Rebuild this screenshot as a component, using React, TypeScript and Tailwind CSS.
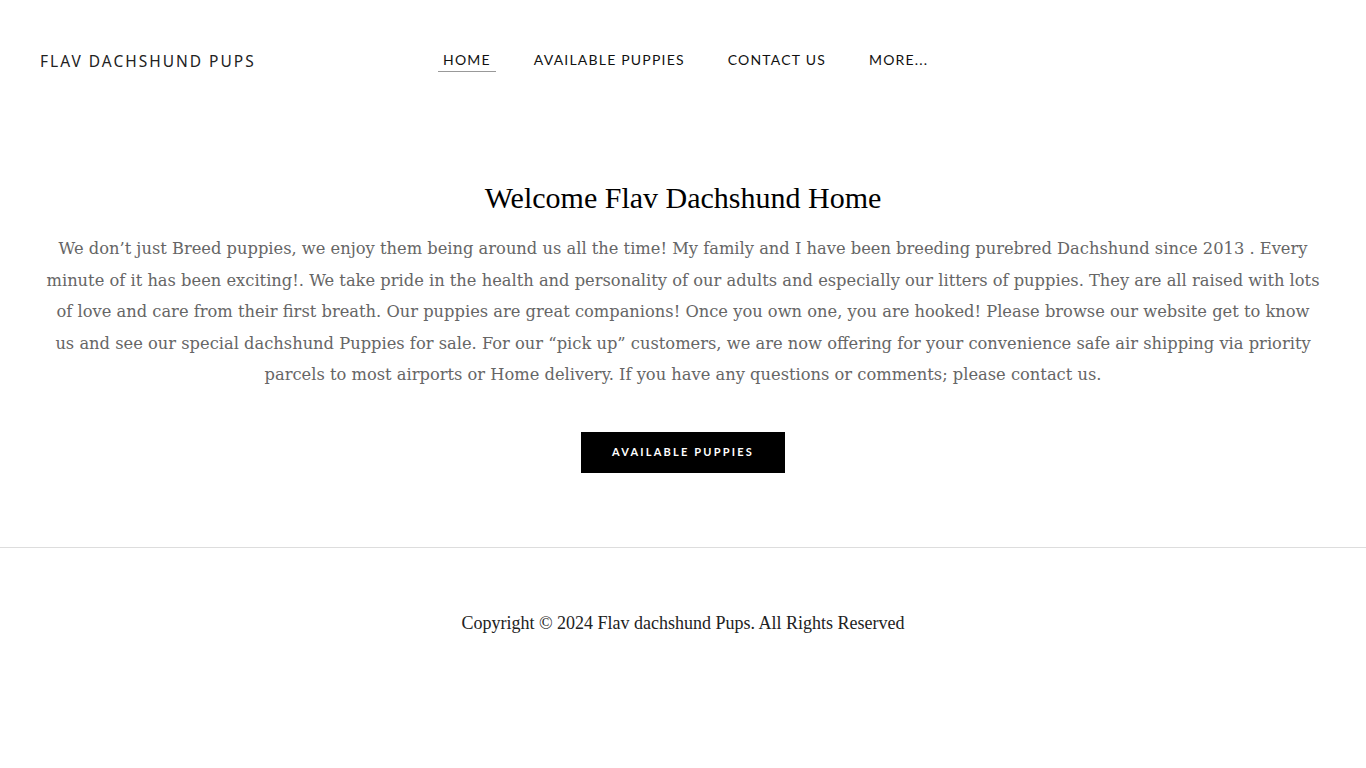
export default function App() {
  const nav = ["HOME", "AVAILABLE PUPPIES", "CONTACT US", "MORE..."];
  return (
    <div className="min-h-screen bg-white">
      <header className="flex items-center h-[121px] px-10">
        <div className="w-[398px] shrink-0 pt-[3px] text-[15.5px] tracking-[2px] text-[#222] font-['Noto_Sans',sans-serif]">
          FLAV DACHSHUND PUPS
        </div>
        <nav className="flex items-center gap-[33px] -mt-[7px] font-['Lato',sans-serif]">
          {nav.map((n, i) => (
            <a
              key={n}
              className={
                "px-[5px] pt-[7px] pb-[1px] text-[14px] tracking-[1.2px] text-[#111] " +
                (i === 0 ? "border-b border-[#999]" : "border-b border-transparent")
              }
            >
              {n}
            </a>
          ))}
        </nav>
      </header>

      <main className="px-10 pt-[57px] pb-[74px] text-center">
        <h1 className="text-[30px] leading-[40px] text-black font-['Liberation_Serif',serif]">
          Welcome Flav Dachshund Home
        </h1>
        <p className="mt-[15px] mx-[6px] text-[16.3px] leading-[31.5px] text-[#666] font-['DejaVu_Serif',serif]">
          We don’t just Breed puppies, we enjoy them being around us all the time! My family and I have been breeding purebred Dachshund since 2013 . Every minute of it has been exciting!. We take pride in the health and personality of our adults and especially our litters of puppies. They are all raised with lots of love and care from their first breath. Our puppies are great companions! Once you own one, you are hooked! Please browse our website get to know us and see our special dachshund Puppies for sale. For our “pick up” customers, we are now offering for your convenience safe air shipping via priority parcels to most airports or Home delivery. If you have any questions or comments; please contact us.
        </p>
        <div className="mt-[41px] flex justify-center">
          <a className="flex items-center justify-center w-[204px] h-[41px] bg-black text-white text-[11px] font-bold tracking-[2.2px] font-['Lato',sans-serif]">
            AVAILABLE PUPPIES
          </a>
        </div>
      </main>

      <footer className="border-t border-[#ddd] pt-[62px] pb-[120px] text-center">
        <p className="text-[18px] text-[#222] font-['Liberation_Serif',serif]">
          Copyright © 2024 Flav dachshund Pups. All Rights Reserved
        </p>
      </footer>
    </div>
  );
}
